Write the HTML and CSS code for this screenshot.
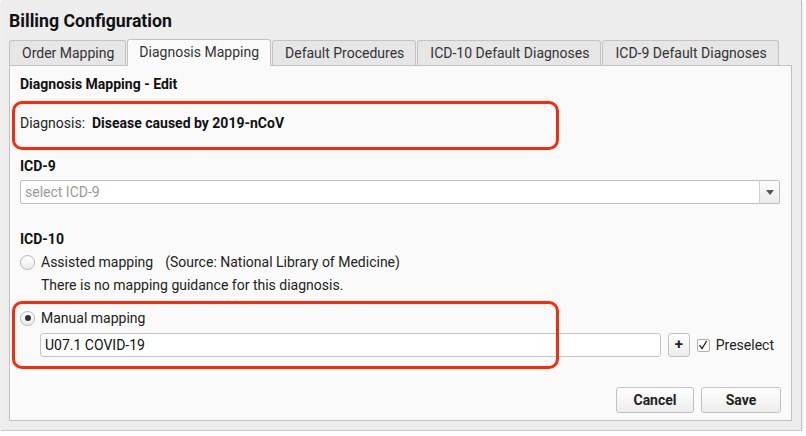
FILE: index.html
```html
<!DOCTYPE html>
<html>
<head>
<meta charset="utf-8">
<link rel="stylesheet" href="styles.css">
</head>
<body>
<div class="window">
  <h1 class="title">Billing Configuration</h1>
  <div class="tabs">
    <div class="tab">Order Mapping</div>
    <div class="tab active">Diagnosis Mapping</div>
    <div class="tab">Default Procedures</div>
    <div class="tab">ICD-10 Default Diagnoses</div>
    <div class="tab">ICD-9 Default Diagnoses</div>
  </div>
  <div class="panel">
    <h2 class="section-title">Diagnosis Mapping - Edit</h2>
    <div class="diag-row">Diagnosis:&nbsp; <b>Disease caused by 2019-nCoV</b></div>

    <div class="label label-icd9">ICD-9</div>
    <div class="select">
      <span class="placeholder">select ICD-9</span>
      <span class="select-btn"><svg width="8" height="5" viewBox="0 0 8 5"><path d="M0 0h8L4 5z" fill="#555"/></svg></span>
    </div>

    <div class="label label-icd10">ICD-10</div>
    <div class="radio-row row-assisted">
      <span class="radio"></span>
      <span>Assisted mapping</span>
      <span class="source">(Source: National Library of Medicine)</span>
    </div>
    <div class="guidance">There is no mapping guidance for this diagnosis.</div>
    <div class="radio-row row-manual">
      <span class="radio checked"></span>
      <span>Manual mapping</span>
    </div>
    <div class="input-row">
      <div class="text-input">U07.1 COVID-19</div>
      <div class="plus-btn">+</div>
      <span class="checkbox"><svg width="10" height="10" viewBox="0 0 10 10"><path d="M1.5 5.2 L4 8.5 L8.7 1" fill="none" stroke="#222" stroke-width="1.3"/></svg></span>
      <span class="preselect">Preselect</span>
    </div>
    <div class="actions">
      <div class="btn btn-cancel">Cancel</div>
      <div class="btn btn-save">Save</div>
    </div>

    <div class="annot annot-1"></div>
    <div class="annot annot-2"></div>
  </div>
</div>
</body>
</html>
```
FILE: styles.css
```css
* { box-sizing: border-box; }
html, body { margin: 0; padding: 0; background: #ffffff; }
body {
  font-family: Roboto, "Liberation Sans", sans-serif;
  font-size: 14px;
  color: #222;
}
.window {
  margin-left: 1px;
  width: 801px;
  height: 431px;
  background: #ededed;
  border-right: 1px solid #c4c4c4;
  border-bottom: 1px solid #c8c8c8;
  box-shadow: 0 2px 3px rgba(0,0,0,0.18);
  padding-left: 8px;
}
.title {
  margin: 0;
  padding-top: 10px;
  font-size: 17.7px;
  line-height: 22px;
  font-weight: 700;
  color: #111;
}
.tabs {
  display: flex;
  margin-top: 8px;
  height: 25px;
  align-items: flex-end;
  position: relative;
  z-index: 1;
}
.tab {
  height: 25px;
  line-height: 25px;
  padding: 0 11px 0 12px;
  background: #e6e6e6;
  border: 1px solid #c2c2c2;
  border-bottom: none;
  border-radius: 3px 3px 0 0;
  margin-right: 1px;
  color: #333;
  white-space: nowrap;
}
.tab.active {
  height: 27px;
  line-height: 25px;
  margin-bottom: -1px;
  background: #fafafa;
  padding: 0 11px;
}
.panel {
  position: relative;
  width: 783px;
  height: 356px;
  background: #fafafa;
  border: 1px solid #c2c2c2;
  padding: 10px 11px 0 10px;
}
.section-title {
  margin: 0;
  font-size: 14px;
  line-height: 16px;
  font-weight: 700;
  color: #111;
}
.diag-row {
  margin-top: 23px;
  line-height: 16px;
  color: #222;
}
.diag-row b { color: #111; }
.label {
  font-weight: 700;
  line-height: 16px;
  color: #111;
}
.label-icd9 { margin-top: 27px; }
.label-icd10 { margin-top: 27px; }
.select {
  margin-top: 6px;
  height: 24px;
  border: 1px solid #bdbdbd;
  background: #fff;
  display: flex;
  align-items: center;
  border-radius: 2px;
}
.placeholder {
  flex: 1;
  padding-left: 4px;
  color: #9a9a9a;
}
.select-btn {
  width: 20px;
  height: 22px;
  border-left: 1px solid #cfcfcf;
  background: linear-gradient(#fdfdfd, #ececec);
  display: flex;
  align-items: center;
  justify-content: center;
}
.radio-row {
  display: flex;
  align-items: center;
  line-height: 16px;
}
.row-assisted { margin-top: 7px; }
.row-manual { margin-top: 17px; }
.radio {
  width: 15px;
  height: 15px;
  border-radius: 50%;
  border: 1px solid #b4b4b4;
  background: linear-gradient(#ffffff, #ececec);
  margin-right: 6px;
  position: relative;
}
.radio.checked::after {
  content: "";
  position: absolute;
  left: 3.5px;
  top: 3.5px;
  width: 6px;
  height: 6px;
  border-radius: 50%;
  background: #333;
}
.source { margin-left: 12px; }
.guidance {
  margin-top: 7px;
  margin-left: 21px;
  line-height: 16px;
}
.input-row {
  margin-top: 7px;
  margin-left: 20px;
  margin-right: 6px;
  display: flex;
  align-items: center;
}
.text-input {
  flex: 1;
  height: 24px;
  line-height: 22px;
  border: 1px solid #c4c4c4;
  border-radius: 3px;
  background: #fff;
  padding-left: 4px;
  color: #111;
}
.plus-btn {
  margin-left: 7px;
  width: 22px;
  height: 24px;
  line-height: 21px;
  text-align: center;
  font-weight: 700;
  font-size: 15px;
  border: 1px solid #c2c2c2;
  border-radius: 3px;
  background: linear-gradient(#ffffff, #ebebeb);
  color: #222;
}
.checkbox {
  margin-left: 7px;
  width: 13px;
  height: 13px;
  border: 1px solid #b0b0b0;
  background: #fff;
  display: flex;
  align-items: center;
  justify-content: center;
  border-radius: 2px;
}
.preselect {
  margin-left: 6px;
  color: #222;
}
.actions {
  margin-top: 30px;
  display: flex;
  justify-content: flex-end;
  gap: 7px;
  margin-right: -1px;
}
.btn {
  height: 26px;
  line-height: 24px;
  text-align: center;
  font-weight: 700;
  border: 1px solid #c2c2c2;
  border-radius: 3px;
  background: linear-gradient(#ffffff, #ececec);
  color: #222;
}
.btn-cancel { width: 78px; }
.btn-save { width: 80px; }
.annot {
  position: absolute;
  border: 3px solid #fb2a0a;
  border-radius: 10px;
  left: 2px;
  width: 547px;
}
.annot-1 { top: 35px; height: 49px; }
.annot-2 { top: 235px; height: 68px; }
```
